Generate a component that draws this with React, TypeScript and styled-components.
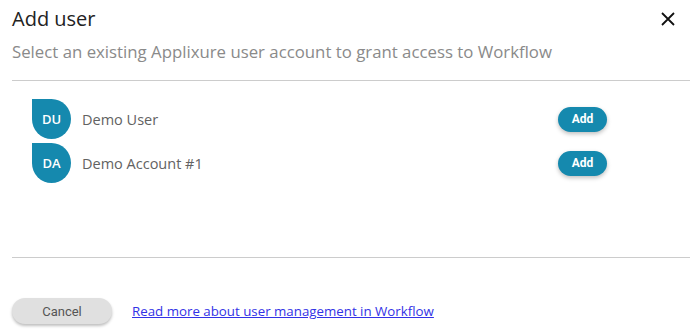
import React, { FC } from 'react';
import styled, { createGlobalStyle } from 'styled-components';

const GlobalStyle = createGlobalStyle`
  html, body {
    margin: 0;
    padding: 0;
    background: #ffffff;
  }
  body {
    font-family: 'Open Sans', 'Liberation Sans', sans-serif;
  }
`;

const Dialog = styled.div`
  width: 699px;
  height: 336px;
  box-sizing: border-box;
  padding: 0 9px 0 12px;
  display: flex;
  flex-direction: column;
  background: #fff;
`;

const Header = styled.div`
  display: flex;
  align-items: flex-start;
  justify-content: space-between;
  padding-top: 5px;
`;

const Title = styled.h2`
  margin: 0;
  font-size: 20px;
  font-weight: 400;
  line-height: 28px;
  color: #222;
`;

const CloseButton = styled.button`
  width: 30px;
  height: 30px;
  margin-top: -1px;
  margin-right: 7px;
  padding: 0;
  border: none;
  background: transparent;
  display: flex;
  align-items: center;
  justify-content: center;
  cursor: pointer;
`;

const Subtitle = styled.p`
  margin: 7px 0 0;
  font-size: 16.8px;
  line-height: 22px;
  color: #8a8a8a;
`;

const Divider = styled.hr<{ $top?: number }>`
  margin: ${(p) => p.$top ?? 0}px 0 0;
  border: none;
  border-top: 1px solid #cccccc;
  width: 678px;
`;

const UserList = styled.div`
  display: flex;
  flex-direction: column;
  gap: 4px;
  padding: 18px 0 0 20px;
  height: 176px;
  box-sizing: border-box;
`;

const Row = styled.div`
  display: flex;
  align-items: center;
  width: 575px;
`;

const Avatar = styled.div`
  width: 39px;
  height: 40px;
  border-radius: 0 50% 50% 50%;
  background: #1589ae;
  color: #fff;
  display: flex;
  align-items: center;
  justify-content: center;
  font-family: 'Open Sans', sans-serif;
  font-weight: 600;
  font-size: 13px;
  flex-shrink: 0;
`;

const Name = styled.span`
  margin-left: 11px;
  flex: 1;
  font-size: 14.5px;
  color: #626262;
`;

const AddButton = styled.button`
  width: 49px;
  height: 25px;
  border: none;
  border-radius: 13px;
  background: #1589ae;
  color: #fff;
  font-family: Roboto, 'Liberation Sans', sans-serif;
  font-weight: 700;
  font-size: 12px;
  box-shadow: 0 2px 4px rgba(0, 0, 0, 0.25);
  cursor: pointer;
  padding: 0;
`;

const Footer = styled.div`
  display: flex;
  align-items: center;
  gap: 20px;
  padding-top: 40px;
`;

const CancelButton = styled.button`
  width: 100px;
  height: 26px;
  border: none;
  border-radius: 13px;
  background: #e0e0e0;
  color: #555;
  font-family: Roboto, 'Liberation Sans', sans-serif;
  font-size: 13px;
  box-shadow: 0 2px 3px rgba(0, 0, 0, 0.25);
  padding: 0;
  cursor: pointer;
`;

const HelpLink = styled.a`
  font-size: 13.3px;
  color: #3232e6;
  text-decoration: underline;
`;

const users = [
  { initials: 'DU', name: 'Demo User' },
  { initials: 'DA', name: 'Demo Account #1' },
];

const App: FC = () => (
  <>
    <GlobalStyle />
    <Dialog>
      <Header>
        <Title>Add user</Title>
        <CloseButton aria-label="Close">
          <svg width="14" height="14" viewBox="0 0 14 14">
            <path d="M1 1L13 13M13 1L1 13" stroke="#111" strokeWidth="1.8" />
          </svg>
        </CloseButton>
      </Header>
      <Subtitle>Select an existing Applixure user account to grant access to Workflow</Subtitle>
      <Divider $top={17} />
      <UserList>
        {users.map((u) => (
          <Row key={u.initials}>
            <Avatar>{u.initials}</Avatar>
            <Name>{u.name}</Name>
            <AddButton>Add</AddButton>
          </Row>
        ))}
      </UserList>
      <Divider />
      <Footer>
        <CancelButton>Cancel</CancelButton>
        <HelpLink href="#">Read more about user management in Workflow</HelpLink>
      </Footer>
    </Dialog>
  </>
);

export default App;
